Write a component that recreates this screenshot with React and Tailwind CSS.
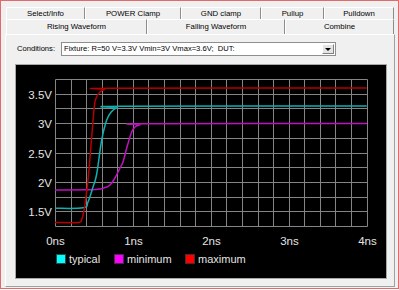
import React from "react";

const W = 370;
const H = 187;
const gx = (j) => Math.round(39 + j * 15.58) + 0.5;
const gy = (i) => Math.round(14 + i * 14.7) + 0.5;

function smooth(pts) {
  let d = `M${pts[0][0]},${pts[0][1]}`;
  for (let i = 0; i < pts.length - 1; i++) {
    const p0 = pts[i - 1] || pts[i];
    const p1 = pts[i];
    const p2 = pts[i + 1];
    const p3 = pts[i + 2] || p2;
    const t = 0.18;
    const c1x = p1[0] + (p2[0] - p0[0]) * t;
    const c1y = p1[1] + (p2[1] - p0[1]) * t;
    const c2x = p2[0] - (p3[0] - p1[0]) * t;
    const c2y = p2[1] - (p3[1] - p1[1]) * t;
    d += ` C${c1x.toFixed(2)},${c1y.toFixed(2)} ${c2x.toFixed(2)},${c2y.toFixed(2)} ${p2[0]},${p2[1]}`;
  }
  return d;
}

const red = [
  [39, 157.5], [62, 157.5], [65.5, 155], [67.5, 148], [69.5, 136], [72.5, 110], [75.7, 72], [78.5, 40], [80.7, 32], [84, 27], [89, 24.3], [97, 23.3], [350.7, 23],
];
const cyan = [
  [39, 143.3], [67, 142.8], [72, 137], [77, 122], [80.7, 109], [85.7, 75], [90.7, 55], [95.7, 46.5], [100.7, 43], [106, 41.2], [350.7, 41],
];
const magenta = [
  [39, 125], [79, 124.6], [89, 122.5], [94, 120], [99, 113], [104, 103], [107, 97], [111, 82], [115.7, 67], [119, 62], [124, 59.8], [130, 58.7], [350.7, 58.5],
];

function Chart() {
  const yLabels = [
    [1, "3.5V"],
    [3, "3V"],
    [5, "2.5V"],
    [7, "2V"],
    [9, "1.5V"],
  ];
  const xLabels = [
    [0, "0ns"],
    [5, "1ns"],
    [10, "2ns"],
    [15, "3ns"],
    [20, "4ns"],
  ];
  return (
    <svg width={W} height={H} className="block" style={{ fontFamily: '"Liberation Sans", Arial, sans-serif' }}>
      {Array.from({ length: 21 }, (_, j) => (
        <line key={"v" + j} x1={gx(j)} x2={gx(j)} y1={gy(0)} y2={gy(10)} stroke="#858585" strokeWidth="1" />
      ))}
      {Array.from({ length: 11 }, (_, i) => (
        <line key={"h" + i} x1={gx(0)} x2={gx(20)} y1={gy(i)} y2={gy(i)} stroke="#858585" strokeWidth="1" />
      ))}
      {yLabels.map(([i, t]) => (
        <text key={t} x={36} y={gy(i) + 4.2} textAnchor="end" fill="#e4e4e4" fontSize="11.5">
          {t}
        </text>
      ))}
      {xLabels.map(([j, t]) => (
        <text key={t} x={gx(j)} y={180} textAnchor="middle" fill="#e4e4e4" fontSize="11.5">
          {t}
        </text>
      ))}
      <path d={smooth(magenta)} fill="none" stroke="#c010c0" strokeWidth="1.5" strokeLinejoin="round" />
      <path d={smooth(cyan)} fill="none" stroke="#10b0b0" strokeWidth="1.5" strokeLinejoin="round" />
      <path d={smooth(red)} fill="none" stroke="#b80000" strokeWidth="1.5" strokeLinejoin="round" />
    </svg>
  );
}

function Legend() {
  return (
    <div className="flex items-center h-[14px] pl-[40px] text-[11px] text-[#e4e4e4] leading-none">
      <div className="flex items-center gap-[3px] w-[58px]">
        <div className="w-[10px] h-[10px] bg-[#00ffff] border border-[#2a4a4a]" />
        <span>typical</span>
      </div>
      <div className="flex items-center gap-[3px] w-[71px]">
        <div className="w-[10px] h-[10px] bg-[#ff00ff] border border-[#4a2a4a]" />
        <span>minimum</span>
      </div>
      <div className="flex items-center gap-[3px]">
        <div className="w-[10px] h-[10px] bg-[#ff0000] border border-[#4a2a2a]" />
        <span>maximum</span>
      </div>
    </div>
  );
}

function Tab({ w, children }) {
  return (
    <div
      className="h-full flex items-center justify-center bg-[#f0f0f0] border-t border-l border-r border-t-white border-l-white border-r-[#8c8c8c] text-[7.8px]"
      style={{ width: w }}
    >
      <span className="leading-none">{children}</span>
    </div>
  );
}

export default function App() {
  return (
    <div className="w-[399px] h-[290px] bg-white">
      <div
        className="w-[399px] h-[289px] bg-[#f0f0f0] border border-[#e26a6a] text-[7.6px] text-black"
        style={{ fontFamily: '"Liberation Sans", Arial, sans-serif' }}
      >
        <div className="pl-[4px] pt-[6px]">
          <div className="flex h-[12px] pl-[1px]">
            <Tab w={79}>Select/Info</Tab>
            <Tab w={96}>POWER Clamp</Tab>
            <Tab w={80}>GND clamp</Tab>
            <Tab w={63}>Pullup</Tab>
            <Tab w={70}>Pulldown</Tab>
          </div>
          <div className="flex h-[15px] pl-[1px]">
            <Tab w={141}>Rising Waveform</Tab>
            <Tab w={138}>Falling Waveform</Tab>
            <Tab w={109}>Combine</Tab>
          </div>
          <div className="w-[390px] h-[253px] border border-t-white border-l-white border-r-[#a0a0a0] border-b-[#a0a0a0]">
            <div className="flex items-center mt-[7px] pl-[11px]">
              <div className="w-[44px]">Conditions:</div>
              <div className="w-[275px] h-[14px] bg-white border border-[#8e8e8e] flex items-center justify-between">
                <span className="pl-[2px] whitespace-pre leading-none">Fixture: R=50 V=3.3V Vmin=3V Vmax=3.6V;  DUT:</span>
                <div className="w-[12px] h-[10px] mr-[1px] bg-[#e4e4e4] border border-t-white border-l-white border-r-[#808080] border-b-[#808080] flex items-center justify-center">
                  <div className="w-0 h-0 border-l-[3px] border-r-[3px] border-t-[3px] border-l-transparent border-r-transparent border-t-black" />
                </div>
              </div>
            </div>
            <div className="ml-[9px] mt-[8px] w-[372px] h-[215px] bg-black border border-[#a8a8a8]">
              <Chart />
              <Legend />
            </div>
          </div>
        </div>
      </div>
    </div>
  );
}
